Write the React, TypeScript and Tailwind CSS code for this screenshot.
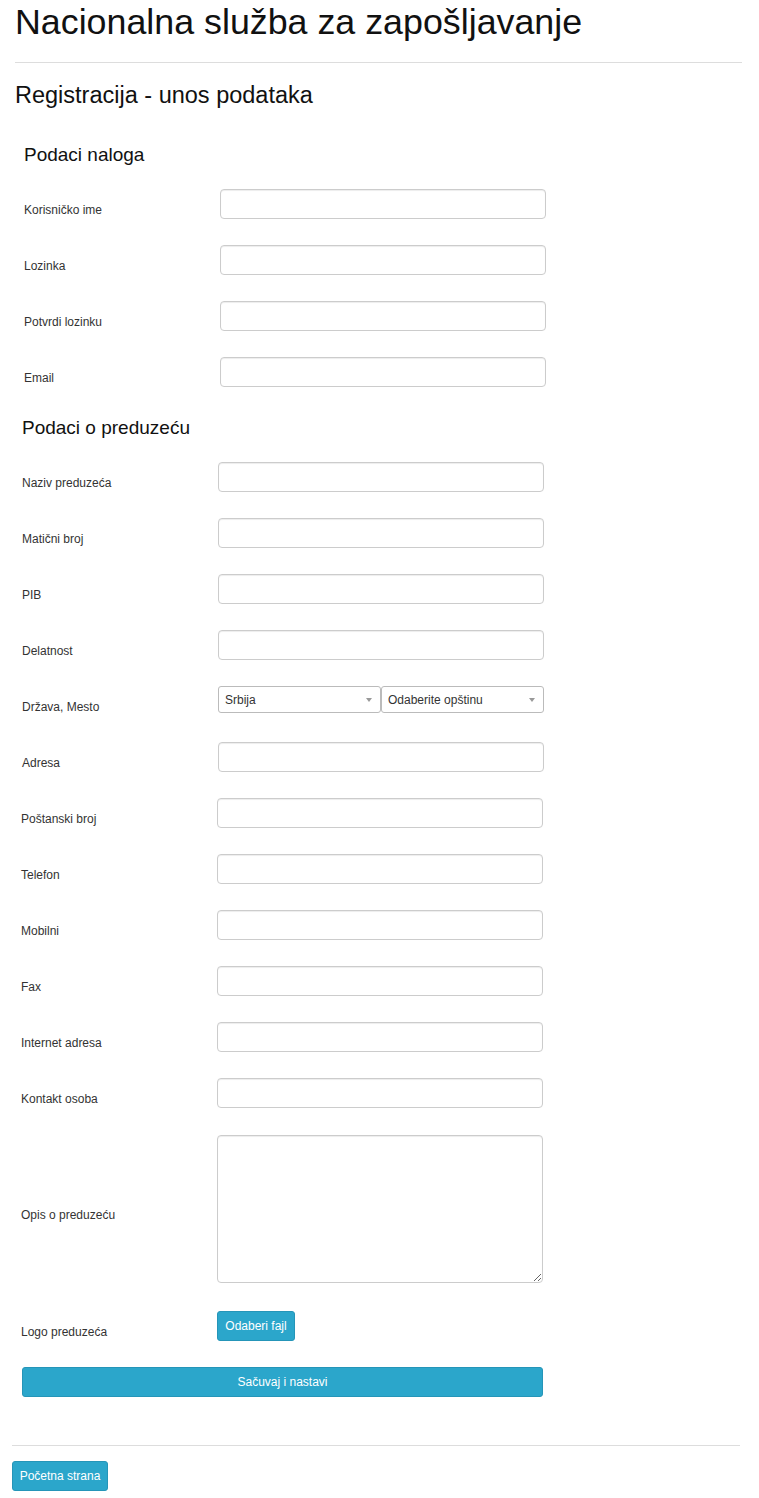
const font = { fontFamily: '"Liberation Sans", Arial, Helvetica, sans-serif' };

const padMap: Record<number, string> = {
  24: "pl-[24px]",
  22: "pl-[22px]",
  21: "pl-[21px]",
};

const account = [
  { label: "Korisničko ime", type: "text" },
  { label: "Lozinka", type: "password" },
  { label: "Potvrdi lozinku", type: "password" },
  { label: "Email", type: "email" },
];

const company = [
  { label: "Naziv preduzeća", x: 22 },
  { label: "Matični broj", x: 22 },
  { label: "PIB", x: 22 },
  { label: "Delatnost", x: 22 },
  { label: "Država, Mesto", x: 22, select: true },
  { label: "Adresa", x: 22 },
  { label: "Poštanski broj", x: 21 },
  { label: "Telefon", x: 21 },
  { label: "Mobilni", x: 21 },
  { label: "Fax", x: 21 },
  { label: "Internet adresa", x: 21 },
  { label: "Kontakt osoba", x: 21 },
];

const inputCls =
  "block h-[30px] w-[326px] rounded-[4px] border border-[#ccc] bg-white px-3 text-[12px] text-[#555] shadow-[inset_0_1px_1px_rgba(0,0,0,0.075)] outline-none";

const labelCls = "w-[196px] shrink-0 pt-[13px] text-[12px] leading-[17px] text-[#333]";

function Row({ label, x, children, first }: { label: string; x: number; children: React.ReactNode; first?: boolean }) {
  return (
    <div className={`flex items-center ${padMap[x]} ${first ? "" : "mt-[26px]"}`}>
      <label className={labelCls}>{label}</label>
      {children}
    </div>
  );
}

function Select({ value }: { value: string }) {
  return (
    <div className="relative flex h-[27px] w-[163px] items-center rounded-[3px] border border-[#bbb] bg-white pl-[6px] text-[12px] text-[#333]">
      {value}
      <span className="absolute right-[8px] top-[11px] h-0 w-0 border-x-[3.5px] border-t-[4px] border-x-transparent border-t-[#999]" />
    </div>
  );
}

const btn =
  "rounded-[3px] border border-[#2595b8] bg-[#2ba6cb] text-[12px] leading-none text-white";

export default function App() {
  return (
    <div className="min-h-screen bg-white" style={font}>
      <div className="pl-[15px] pr-[17px]">
        <h1 className="mt-[3px] text-[35.8px] leading-[1.1] text-[#111]">Nacionalna služba za zapošljavanje</h1>
        <hr className="mt-[20px] border-t border-[#ddd]" />
        <h3 className="mt-[20px] text-[23.5px] leading-[1.1] text-[#111]">Registracija - unos podataka</h3>
      </div>

      {/* Podaci naloga */}
      <h4 className="mt-[35px] pl-[24px] text-[19px] leading-[21px] text-[#111]">Podaci naloga</h4>
      <div className="mt-[23.5px]">
        {account.map((f, i) => (
          <Row key={f.label} label={f.label} x={24} first={i === 0}>
            <input type={f.type} className={inputCls} />
          </Row>
        ))}
      </div>

      {/* Podaci o preduzeću */}
      <h4 className="mt-[30px] pl-[22px] text-[19px] leading-[21px] text-[#111]">Podaci o preduzeću</h4>
      <div className="mt-[24.5px]">
        {company.map((f, i) => (
          <Row key={f.label} label={f.label} x={f.x} first={i === 0}>
            {f.select ? (
              <div className="flex h-[30px] items-start">
                <Select value="Srbija" />
                <Select value="Odaberite opštinu" />
              </div>
            ) : (
              <input type="text" className={inputCls} />
            )}
          </Row>
        ))}
        <div className="mt-[27px] flex items-center pl-[21px]">
          <label className={labelCls}>Opis o preduzeću</label>
          <textarea className="block h-[148px] w-[326px] rounded-[4px] border border-[#ccc] bg-white px-3 py-2 text-[12px] shadow-[inset_0_1px_1px_rgba(0,0,0,0.075)] outline-none" />
        </div>
        <div className="mt-[28px] flex items-center pl-[21px]">
          <label className={labelCls}>Logo preduzeća</label>
          <button className={`${btn} h-[30px] w-[78px]`}>Odaberi fajl</button>
        </div>
        <div className="mt-[26px] pl-[22px]">
          <button className={`${btn} h-[30px] w-[521px]`}>Sačuvaj i nastavi</button>
        </div>
      </div>

      <div className="pl-[12px] pr-[19px]">
        <hr className="mt-[48px] border-t border-[#ddd]" />
        <button className={`${btn} mt-[15px] h-[30px] w-[96px]`}>Početna strana</button>
      </div>
    </div>
  );
}
